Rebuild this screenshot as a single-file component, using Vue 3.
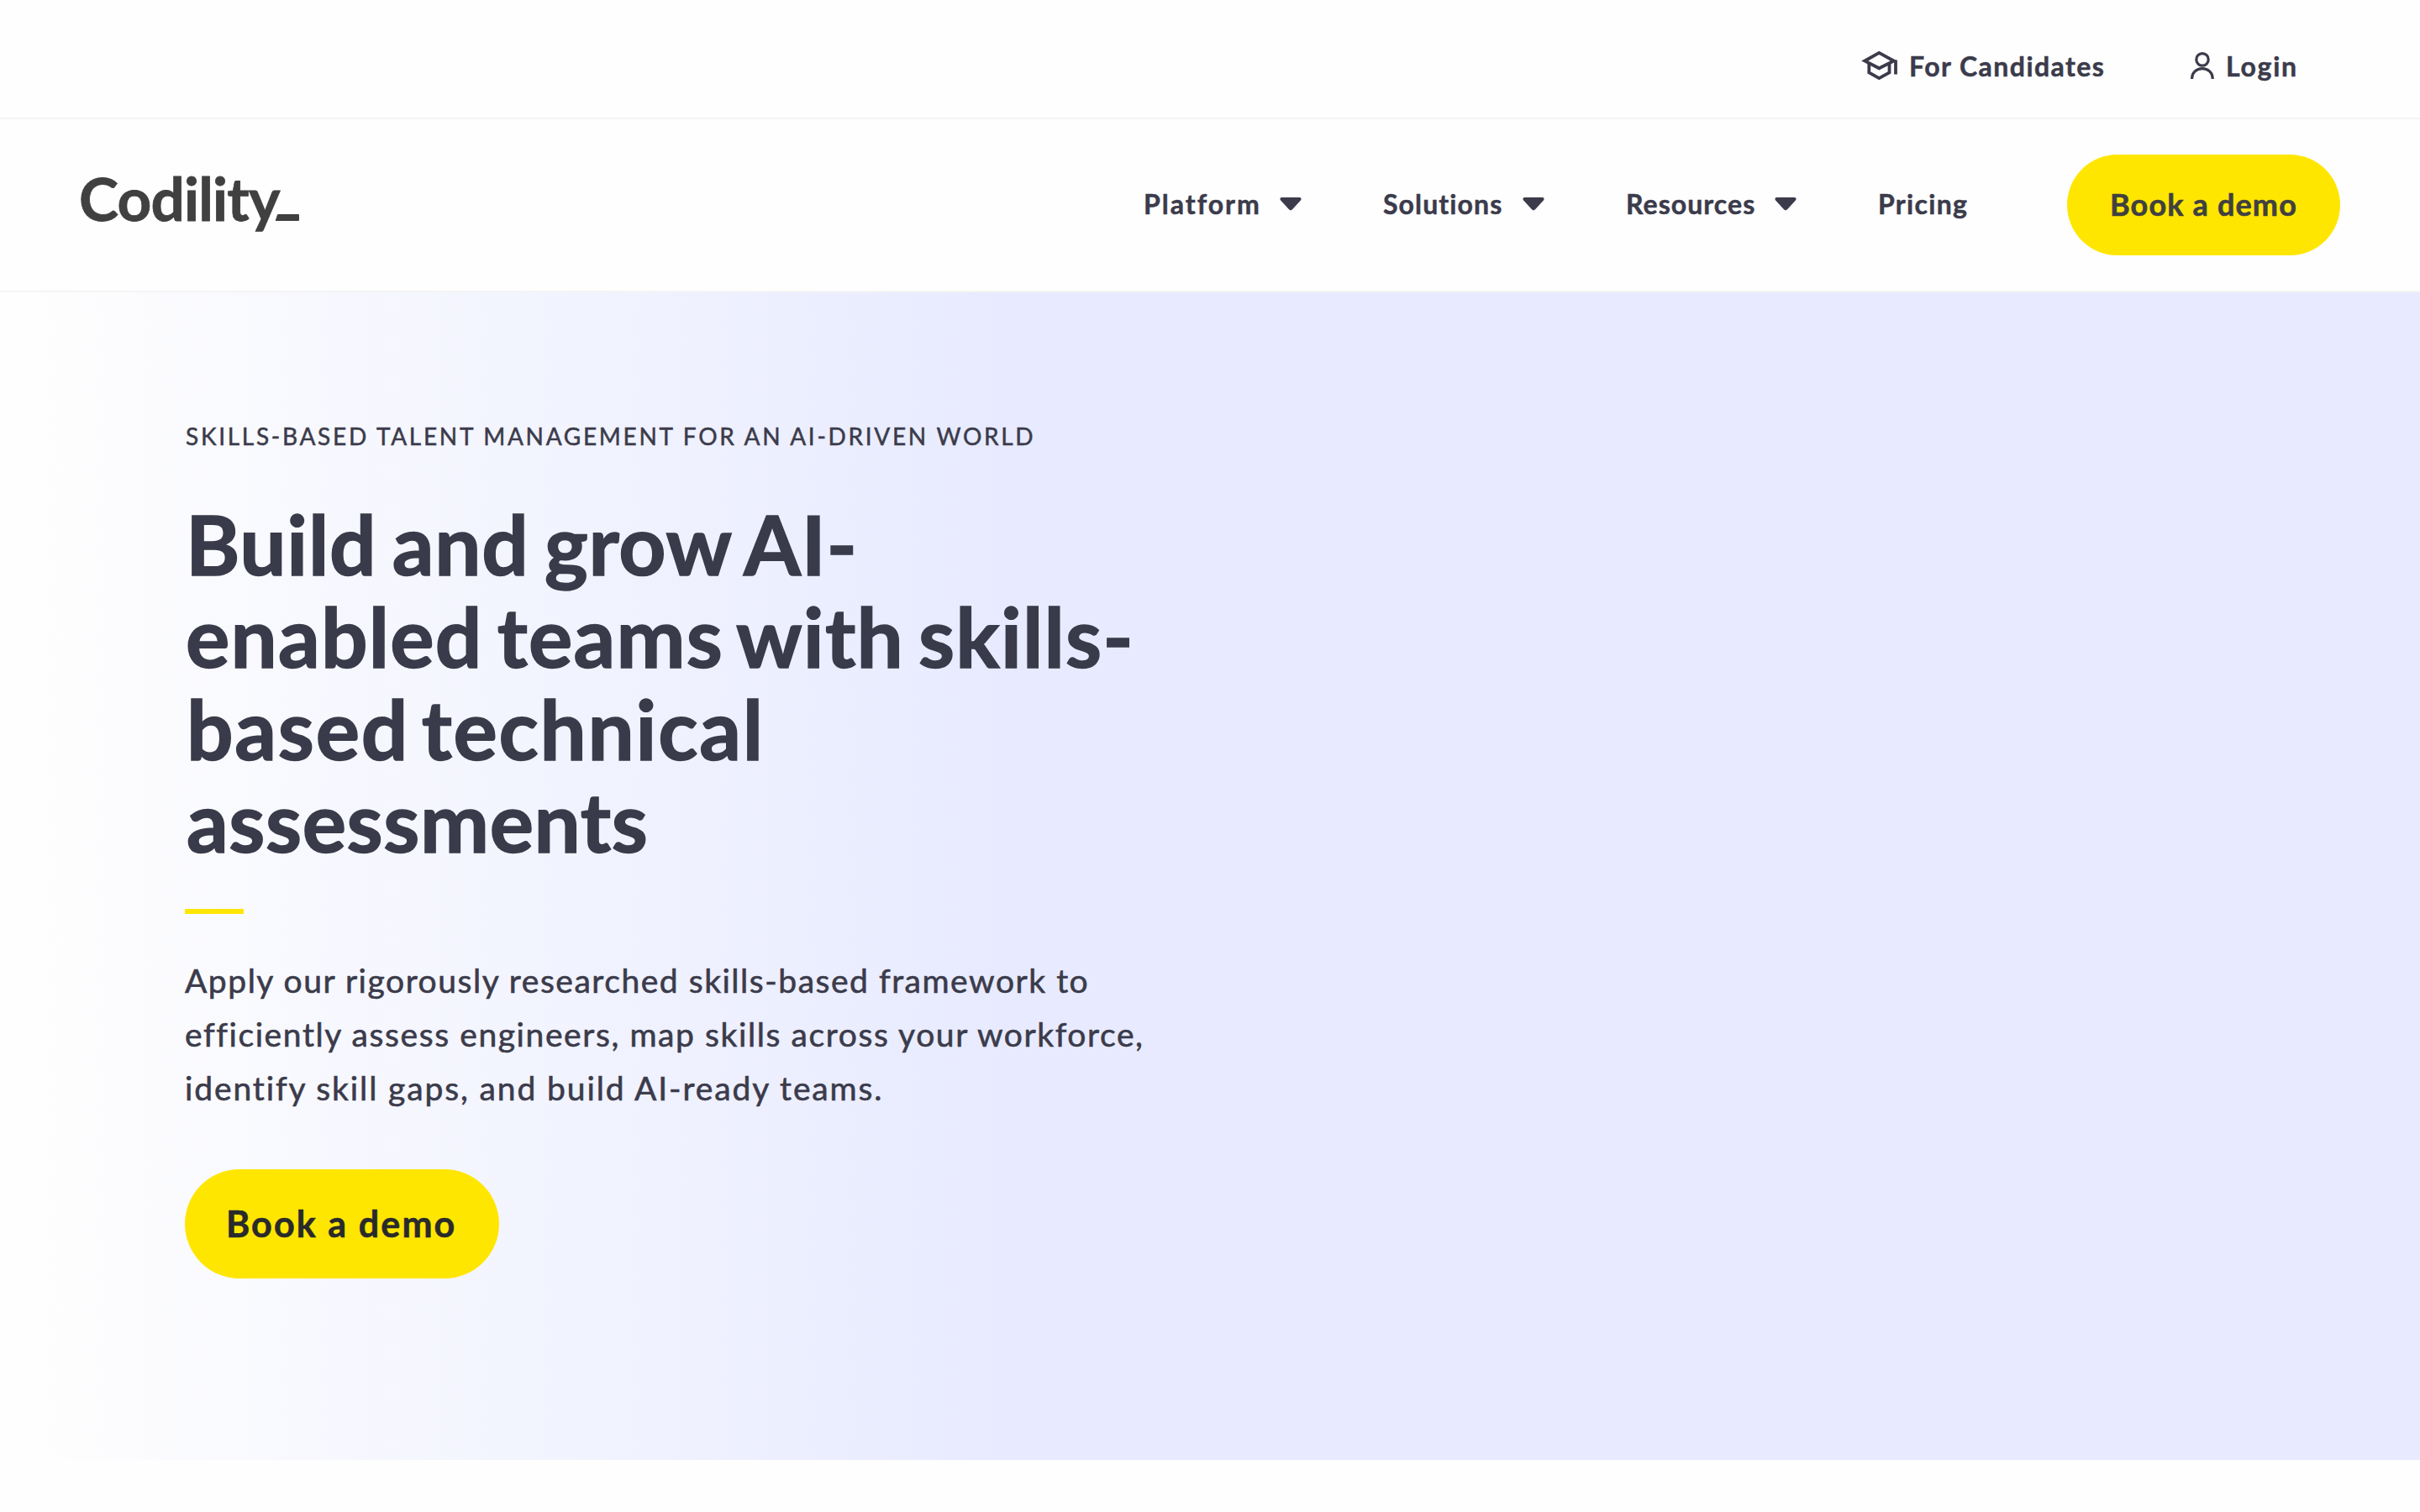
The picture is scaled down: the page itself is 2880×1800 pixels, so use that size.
<script setup>
const menu = [
  { label: 'Platform', width: 162, spacing: 2, arrow: true },
  { label: 'Solutions', width: 166, spacing: 1.1, arrow: true },
  { label: 'Resources', width: 177, spacing: 1.05, arrow: true },
  { label: 'Pricing', width: 225, spacing: 1.3, arrow: false }
]
const headline = [
  { text: 'Build and grow AI-', spacing: 0.7, word: -6, indent: 1 },
  { text: 'enabled teams with skills-', spacing: 1.2, word: -8, indent: 1 },
  { text: 'based technical', spacing: 1.75, word: -11, indent: 2 },
  { text: 'assessments', spacing: 0.6, word: 0, indent: 2 }
]
const intro = [
  { text: 'Apply our rigorously researched skills-based framework to', spacing: 1.53 },
  { text: 'efficiently assess engineers, map skills across your workforce,', spacing: 1.59 },
  { text: 'identify skill gaps, and build AI-ready teams.', spacing: 1.88 }
]
</script>

<template>
  <div class="page">
    <div class="topbar">
      <a class="top-link candidates">
        <svg width="44" height="37" viewBox="0 0 44 37" fill="none" stroke="currentColor" stroke-width="3.8">
          <path d="M4.200 12.5 21.300 2.900 38.800 12.5 21.300 21.300Z" />
          <path d="M9.300 15.5v11L21.300 33.200l12.200-6.700v-11" />
          <path d="M41 11.500v17" />
        </svg>
        <span>For Candidates</span>
      </a>
      <a class="top-link login">
        <svg width="30" height="34" viewBox="0 0 30 34" fill="none" stroke="currentColor" stroke-width="3.2">
          <ellipse cx="15" cy="9.900" rx="7.200" ry="7.300" />
          <path d="M2.600 33v-1a12.300 11.400 0 0 1 24.600 0v1" />
        </svg>
        <span>Login</span>
      </a>
    </div>

    <header class="header">
      <svg class="logo" width="284" height="120" viewBox="-10 -20 284 120" role="img" aria-label="Codility">
        <text x="0" y="58">Codility</text>
        <path d="M237 50h24a1 1 0 0 1 1 1v6a1 1 0 0 1-1 1h-26.500q-1 0-.6-1l2-6q.3-1 1.100-1z" />
      </svg>
      <nav class="nav">
        <a v-for="m in menu" :key="m.label" class="nav-item">
          <span :style="{ width: m.width + 'px', letterSpacing: m.spacing + 'px' }">{{ m.label }}</span>
          <svg v-if="m.arrow" width="26" height="16" viewBox="0 0 26 16" fill="currentColor">
            <path d="M2.500 0h21c2.300 0 2.700 2.300 1.200 3.800L14.800 14.600q-1.800 1.600-3.600 0L1.300 3.800C-.2 2.300.2 0 2.500 0z" />
          </svg>
        </a>
      </nav>
      <a class="button button-nav">Book a demo</a>
    </header>

    <section class="hero">
      <p class="eyebrow">SKILLS-BASED TALENT MANAGEMENT FOR AN AI-DRIVEN WORLD</p>
      <h1>
        <span
          v-for="l in headline"
          :key="l.text"
          :style="{ letterSpacing: l.spacing + 'px', wordSpacing: l.word + 'px', paddingLeft: l.indent + 'px' }"
        >{{ l.text }}</span>
      </h1>
      <div class="rule"></div>
      <p class="intro">
        <span v-for="l in intro" :key="l.text" :style="{ letterSpacing: l.spacing + 'px' }">{{ l.text }}</span>
      </p>
      <a class="button button-hero">Book a demo</a>
    </section>
  </div>
</template>

<style>
body {
  margin: 0;
  background: #fefefe;
}
</style>

<style scoped>
.page {
  width: 2880px;
  height: 1800px;
  overflow: hidden;
  background: #fefefe;
  color: #3b3b4b;
  font-family: Lato, "Liberation Sans", sans-serif;
}
.topbar {
  display: flex;
  justify-content: flex-end;
  box-sizing: border-box;
  height: 142px;
  padding: 58px 147px 0 0;
  border-bottom: 2px solid #f4f4f4;
}
.top-link {
  display: flex;
  height: 40px;
  font-size: 32px;
  font-weight: 700;
  line-height: 42px;
  -webkit-text-stroke: 0.5px currentColor;
}
.top-link svg {
  flex: none;
}
.candidates {
  width: 390px;
  letter-spacing: 1.46px;
}
.candidates svg {
  margin: 2px 13px 0 -1px;
}
.login {
  width: 127px;
  letter-spacing: 1.73px;
}
.login svg {
  margin: 3px 13px 0 0;
}
.header {
  display: flex;
  align-items: center;
  box-sizing: border-box;
  height: 206px;
  padding: 0 95px 0 84px;
  border-bottom: 2px solid #f4f4f4;
}
.logo {
  margin-top: 2px;
  fill: #404040;
}
.logo text {
  font-size: 71px;
  font-weight: 700;
  letter-spacing: -0.78px;
  stroke: #404040;
  stroke-width: 0.8px;
}
.nav {
  display: flex;
  gap: 97px;
  margin-left: auto;
  padding-bottom: 2px;
}
.nav-item {
  display: flex;
  align-items: center;
  height: 40px;
  font-size: 32px;
  font-weight: 700;
  line-height: 40px;
  -webkit-text-stroke: 0.5px currentColor;
}
.nav-item span {
  flex: none;
}
.button {
  display: block;
  box-sizing: border-box;
  border-radius: 65px;
  background: #ffe600;
  font-weight: 700;
  white-space: nowrap;
  -webkit-text-stroke: 0.6px currentColor;
}
.button-nav {
  width: 325px;
  height: 120px;
  padding-left: 51px;
  color: #404040;
  font-size: 36px;
  line-height: 118px;
  letter-spacing: 1.15px;
}
.hero {
  box-sizing: border-box;
  height: 1390px;
  padding: 151px 0 0 220px;
  background: linear-gradient(90deg, #fefefe 40px, #e8ebff 1180px);
}
.eyebrow {
  margin: 0;
  padding-left: 1px;
  font-size: 28px;
  font-weight: 400;
  line-height: 40px;
  letter-spacing: 2.71px;
  -webkit-text-stroke: 0.5px currentColor;
}
h1 {
  margin: 53px 0 0;
  color: #3a3b4a;
  font-size: 98px;
  font-weight: 700;
  line-height: 110px;
  -webkit-text-stroke: 1.5px currentColor;
}
h1 span,
.intro span {
  display: block;
  white-space: nowrap;
}
.rule {
  width: 70px;
  height: 6px;
  margin-top: 50px;
  background: #ffe600;
}
.intro {
  margin: 47px 0 0;
  font-size: 39px;
  font-weight: 400;
  line-height: 64px;
  -webkit-text-stroke: 0.6px currentColor;
}
.button-hero {
  width: 374px;
  height: 130px;
  margin-top: 65px;
  padding-left: 49px;
  color: #292a2b;
  font-size: 43px;
  line-height: 129px;
  letter-spacing: 2.1px;
}
</style>
